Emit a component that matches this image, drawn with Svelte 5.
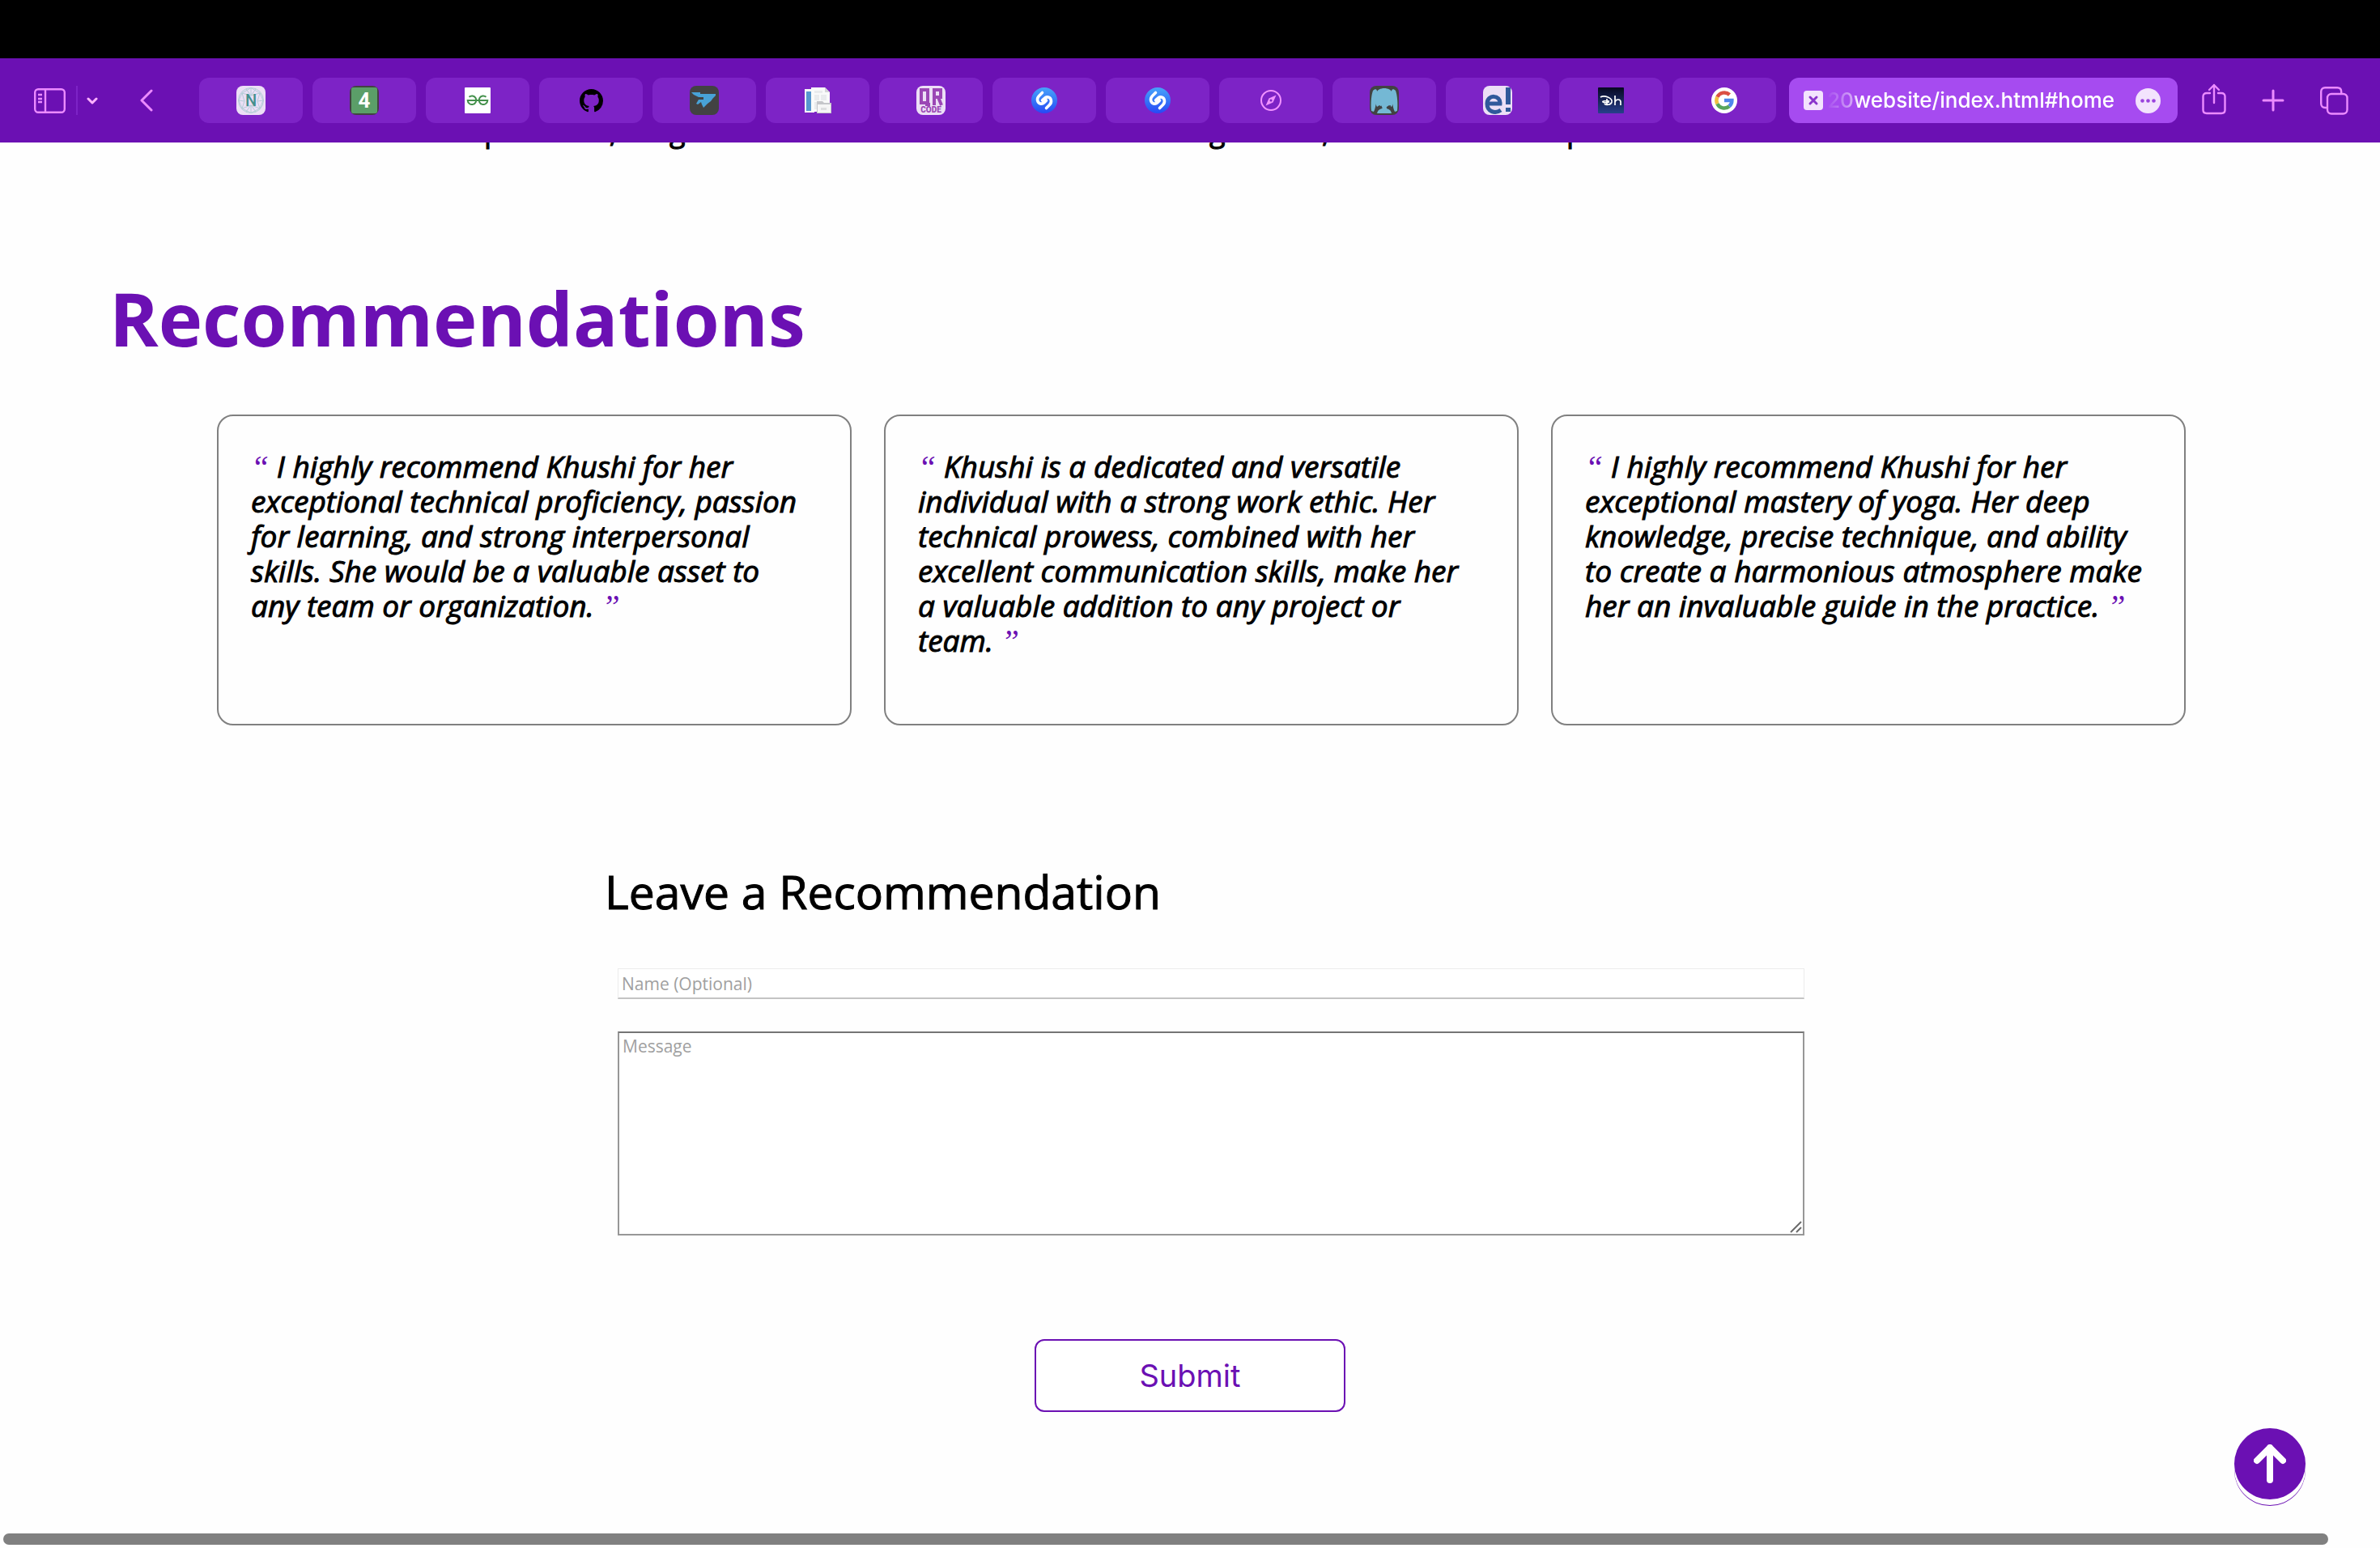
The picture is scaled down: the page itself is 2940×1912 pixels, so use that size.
<script>
  const tabs = [
    'notion', 'four', 'geeks', 'github', 'bird', 'documents', 'qr',
    'shazam', 'shazam', 'compass', 'hair', 'exclaim', 'hotstar', 'google'
  ];

  const quotes = [
    'I highly recommend Khushi for her exceptional technical proficiency, passion for learning, and strong interpersonal skills. She would be a valuable asset to any team or organization.',
    'Khushi is a dedicated and versatile individual with a strong work ethic. Her technical prowess, combined with her excellent communication skills, make her a valuable addition to any project or team.',
    'I highly recommend Khushi for her exceptional mastery of yoga. Her deep knowledge, precise technique, and ability to create a harmonious atmosphere make her an invaluable guide in the practice.'
  ];

  let name = $state('');
  let message = $state('');

  function submit(event) {
    event.preventDefault();
    name = '';
    message = '';
  }
</script>

{#snippet favicon(kind)}
  {#if kind === 'notion'}
    <svg width="36" height="36" viewBox="0 0 36 36">
      <rect width="36" height="36" rx="8" fill="#ecdff6" />
      <g fill="none" stroke="#b4cdd8" stroke-width="1">
        <circle cx="18" cy="18" r="15.500" />
        <path d="M18 2.500 7 9 3 18l4 10 11 5.500L29 28l4-10-4-9zM7 9l11 3 11-3M7 28l11-4 11 4M7 9l3 10-3 9M29 9l-3 10 3 9M18 2.500V12M18 24v9.500M3 18l7 1M33 18l-7 1M12 4l6 8 6-8M12 32l6-8 6 8" />
      </g>
      <text x="18" y="25" text-anchor="middle" font-size="20" font-weight="500" fill="#43908c" class="glyph">N</text>
    </svg>
  {:else if kind === 'four'}
    <svg width="36" height="36" viewBox="0 0 36 36">
      <rect width="36" height="36" rx="8" fill="#424242" />
      <rect x="2" y="2" width="32" height="32" rx="2" fill="#5b9e68" />
      <text x="18" y="27" text-anchor="middle" font-size="26" font-weight="700" fill="#fff" class="glyph">4</text>
    </svg>
  {:else if kind === 'geeks'}
    <svg width="32" height="32" viewBox="0 0 32 32">
      <rect width="32" height="32" rx="1" fill="#fff" />
      <path d="M26.500 11.800A5.300 5.300 0 1 0 28.300 16H3.700a5.300 5.300 0 1 0 1.800-4.200" fill="none" stroke="#43904b" stroke-width="2" />
    </svg>
  {:else if kind === 'github'}
    <svg width="29" height="29" viewBox="0 0 16 16">
      <path fill="#000" d="M8 0C3.580 0 0 3.580 0 8c0 3.540 2.290 6.530 5.470 7.590.4.070.550-.170.550-.380 0-.190-.010-.820-.010-1.490-2.010.370-2.530-.490-2.690-.940-.090-.230-.480-.940-.820-1.130-.280-.150-.680-.520-.010-.530.630-.010 1.080.580 1.230.820.720 1.210 1.870.870 2.330.660.070-.520.280-.870.510-1.070-1.780-.2-3.640-.890-3.640-3.950 0-.870.310-1.590.820-2.150-.080-.2-.360-1.020.080-2.120 0 0 .670-.210 2.200.820.640-.180 1.320-.270 2-.270s1.360.090 2 .270c1.530-1.040 2.200-.820 2.200-.820.440 1.100.160 1.920.080 2.120.510.560.820 1.270.820 2.150 0 3.070-1.870 3.750-3.650 3.950.290.250.540.730.540 1.480 0 1.070-.010 1.930-.010 2.200 0 .210.150.460.550.380A8 8 0 0 0 16 8c0-4.420-3.580-8-8-8z" />
    </svg>
  {:else if kind === 'bird'}
    <svg width="36" height="36" viewBox="0 0 36 36">
      <rect width="36" height="36" rx="8" fill="#424242" />
      <path d="M2 8h11v2h19v2l-3 3-3 4-4 3-5 5-2-4-1-3-4 3-2-1 3-5h6v-3h-6l-6-3z" fill="#48a2d6" />
    </svg>
  {:else if kind === 'documents'}
    <svg width="33" height="33" viewBox="0 0 33 33">
      <path d="M0 2h12v29H0z" fill="#f6f7f8" />
      <path d="M2 5h7v24H2z" fill="#5797cf" />
      <path d="M8 0h17l6 6v24H8z" fill="#f9fafa" />
      <path d="M25 0v6h6z" fill="#d4d5d8" />
      <path d="M12 4h10v3H12zM12 9h6v7h-6zM20 9h7v7h-7zM12 18h7v9h-7z" fill="#e9ebed" />
      <path d="M15 17h7l2 2h9v13H15z" fill="#c5c6ca" />
      <path d="M16 21h16v10H16z" fill="#f5f5f6" />
      <path d="M20 25h7v3h-7z" fill="#dddee0" />
    </svg>
  {:else if kind === 'qr'}
    <svg width="36" height="36" viewBox="0 0 36 36">
      <rect width="36" height="36" rx="8" fill="#ecdff6" />
      <path d="M6 5h8v16H6zM13 20v3h4M22 24V5h8v9h-8M27 14l4 10" fill="none" stroke="#9b47b5" stroke-width="4" />
      <text x="18" y="33" text-anchor="middle" font-size="10" font-weight="900" fill="#9b47b5" class="glyph">CODE</text>
    </svg>
  {:else if kind === 'shazam'}
    <svg width="32" height="32" viewBox="0 0 32 32">
      <defs>
        <linearGradient id="blue" x1="0" y1="0" x2="0" y2="1">
          <stop offset="0" stop-color="#46a5fa" />
          <stop offset="1" stop-color="#2748f5" />
        </linearGradient>
      </defs>
      <circle cx="16" cy="16" r="16" fill="url(#blue)" />
      <path d="M13.500 6.500 9.500 10.500c-3.500 3.500-2 8.500 1.500 9.500 3 1 4.500-1 7.500-4M18.500 25.500l4-4c3.500-3.500 2-8.500-1.500-9.500-3-1-4.500 1-7.500 4" fill="none" stroke="#fff" stroke-width="3.600" stroke-linecap="round" />
    </svg>
  {:else if kind === 'compass'}
    <svg width="26" height="26" viewBox="0 0 26 26">
      <circle cx="13" cy="13" r="12" fill="none" stroke="#f293ff" stroke-width="2" />
      <path d="m19.500 6.500-4 9-9 4 4-9z" fill="#f293ff" />
      <circle cx="13" cy="13" r="1.500" fill="#7d23c6" />
    </svg>
  {:else if kind === 'hair'}
    <svg width="36" height="36" viewBox="0 0 36 36">
      <rect width="36" height="36" rx="8" fill="#424242" />
      <g fill="#74b8d4">
        <path d="M8 9c2-8 18-8 20 0l1 13-2 4-3-2-3 2h-6l-3-2-3 2-2-4z" />
        <path d="M4 6c3-3 6-2 5 4S8 27 5 32l-3-1C1 22 2 11 4 6zM32 6c-3-3-6-2-5 4s1 17 4 22l3-1c1-9 0-20-2-25z" />
        <path d="M9 34c1-4 3-5 6-6v-4h6v4c3 1 5 2 6 6z" />
      </g>
      <path d="m20 27 6-3v4zM14 24l2 4-2-1z" fill="#424242" />
    </svg>
  {:else if kind === 'exclaim'}
    <svg width="36" height="36" viewBox="0 0 36 36">
      <rect width="36" height="36" rx="8" fill="#ecdff6" />
      <path d="M5 22h16c1-11-16-12-16 0 0 10 10 13 17 8" fill="none" stroke="#30599b" stroke-width="5" />
      <path d="M28 2h6v21h-6zM28 27h6v5h-6z" fill="#30599b" />
    </svg>
  {:else if kind === 'hotstar'}
    <svg width="32" height="32" viewBox="0 0 32 32">
      <defs>
        <linearGradient id="night" x1="0" y1="0" x2="0" y2="1">
          <stop offset="0" stop-color="#060821" />
          <stop offset="1" stop-color="#27408b" />
        </linearGradient>
      </defs>
      <rect width="32" height="32" rx="1" fill="url(#night)" />
      <path d="M3 12c5-3 15 1 14 6-1 4-8 4-9 2M11 14v8M14 17c-4-1-9 0-8 1 1 1 5 1 8 0M21 10v12M21 18c1-4 7-4 7 0v4" fill="none" stroke="#fff" stroke-width="1.700" />
    </svg>
  {:else}
    <svg width="32" height="32" viewBox="0 0 32 32">
      <circle cx="16" cy="16" r="16" fill="#fff" />
      <g fill="none" stroke-width="4.500">
        <path d="M22.500 9A9.600 9.600 0 0 0 7.400 11.800" stroke="#db5044" />
        <path d="M7.400 11.800a9.600 9.600 0 0 0 0 8.500" stroke="#f2bd42" />
        <path d="M7.400 20.300a9.600 9.600 0 0 0 14.800 3" stroke="#58a55c" />
        <path d="M22.200 23.300a9.600 9.600 0 0 0 3.200-7.200H16" stroke="#4f86ec" />
      </g>
    </svg>
  {/if}
{/snippet}

<div class="page">
  <header>
    <div class="notch"></div>
    <nav class="toolbar" aria-label="Browser">
      <button class="icon" aria-label="Sidebar">
        <svg width="39" height="31" viewBox="0 0 39 31" fill="none" stroke="#ec8bff" stroke-width="2.400">
          <rect x="1.200" y="1.200" width="36.600" height="28.600" rx="4" />
          <path d="M14 1v29M5 8h5M5 13h5M5 17h5" />
        </svg>
      </button>
      <span class="divider"></span>
      <button class="icon" aria-label="Tab groups">
        <svg width="14" height="9" viewBox="0 0 14 9" fill="none" stroke="#ffb3ff" stroke-width="3" stroke-linecap="round" stroke-linejoin="round"><path d="m2 2 5 5 5-5" /></svg>
      </button>
      <button class="icon back" aria-label="Back">
        <svg width="16" height="28" viewBox="0 0 16 28" fill="none" stroke="#ec8bff" stroke-width="3" stroke-linecap="round" stroke-linejoin="round"><path d="M14 2 2 14l12 12" /></svg>
      </button>
      <div class="tabs">
        {#each tabs as tab}
          <button class="tab" aria-label={tab}>{@render favicon(tab)}</button>
        {/each}
      </div>
      <div class="active">
        <button class="icon" aria-label="Close tab">
          <svg width="24" height="24" viewBox="0 0 24 24">
            <rect width="24" height="24" rx="4" fill="#f3e3fd" />
            <path d="m8 8 8 8M16 8l-8 8" stroke="#8a35cc" stroke-width="3" stroke-linecap="round" />
          </svg>
        </button>
        <span class="url">20website/index.html#home</span>
        <button class="icon" aria-label="Page menu">
          <svg width="31" height="31" viewBox="0 0 31 31">
            <circle cx="15.500" cy="15.500" r="15.500" fill="#f3e3fd" />
            <g fill="#9a43dd"><circle cx="8.500" cy="15.500" r="2.300" /><circle cx="15.500" cy="15.500" r="2.300" /><circle cx="22.500" cy="15.500" r="2.300" /></g>
          </svg>
        </button>
      </div>
      <div class="actions">
        <button class="icon" aria-label="Share">
          <svg width="30" height="42" viewBox="0 0 30 42" fill="none" stroke="#ec8bff" stroke-width="2.400" stroke-linecap="round" stroke-linejoin="round">
            <path d="M10 12H6c-3 0-4.500 1.500-4.500 4v17c0 3 1.500 4 4.500 4h18c3 0 4.500-1 4.500-4V16c0-2.500-1.500-4-4.500-4h-4M15 24V2M9 8l6-6 6 6" />
          </svg>
        </button>
        <button class="icon" aria-label="New tab">
          <svg width="28" height="28" viewBox="0 0 28 28" fill="none" stroke="#ec8bff" stroke-width="3" stroke-linecap="round"><path d="M14 2v24M2 14h24" /></svg>
        </button>
        <button class="icon" aria-label="Tab overview">
          <svg width="35" height="35" viewBox="0 0 35 35" fill="none" stroke="#ec8bff" stroke-width="2.400">
            <rect x="9" y="9" width="24.500" height="24.500" rx="5" />
            <path d="M9 26H6.200c-3 0-5-2-5-5V6.200c0-3 2-5 5-5h15c3 0 5 2 5 5v3" />
          </svg>
        </button>
      </div>
    </nav>
  </header>

  <main>
    <p class="intro">Contributed as producer, a sign and media at an annual student fest galleries, and took on setup.</p>

    <h1>Recommendations</h1>
    <section class="cards">
      {#each quotes as quote}
        <blockquote><span class="mark">“</span> {quote} <span class="mark">”</span></blockquote>
      {/each}
    </section>

    <form onsubmit={submit}>
      <h2>Leave a Recommendation</h2>
      <div class="fields">
        <input type="text" placeholder="Name (Optional)" aria-label="Name (Optional)" bind:value={name} />
        <div class="area">
          <textarea placeholder="Message" aria-label="Message" bind:value={message}></textarea>
          <svg class="grip" width="16" height="16" viewBox="0 0 16 16" stroke="#6b6b6b" stroke-width="2"><path d="M1 14 14 1M8 14l6-6" /></svg>
        </div>
      </div>
      <button class="submit" type="submit">Submit</button>
    </form>
  </main>

  <a class="top" href="#home" aria-label="Back to top">
    <svg width="40" height="48" viewBox="0 0 40 48" fill="none" stroke="#fff" stroke-width="8" stroke-linecap="round" stroke-linejoin="round"><path d="M20 44V4M4 20 20 4l16 16" /></svg>
  </a>
  <div class="scrollbar"></div>
</div>

<style>
  :global(body) {
    background: #fefefe;
  }
  .page {
    min-height: 100vh;
    display: flex;
    flex-direction: column;
    box-sizing: border-box;
    font-family: 'Open Sans', 'Noto Sans', sans-serif;
    color: #000;
  }
  svg {
    display: block;
    flex: none;
  }
  button {
    padding: 0;
    border: 0;
    background: none;
    font: inherit;
    cursor: pointer;
  }
  .glyph {
    font-family: Roboto, sans-serif;
  }
  .notch {
    height: 72px;
    background: #000;
  }
  .toolbar {
    display: flex;
    align-items: center;
    height: 104px;
    box-sizing: border-box;
    padding: 0 39px 0 42px;
    background: #6b10b3;
  }
  .divider {
    width: 2px;
    height: 36px;
    margin: 0 11px 0 13px;
    background: #7d23c6;
  }
  .back {
    margin: 0 57px 0 52px;
  }
  .tabs {
    flex: 1;
    display: flex;
    gap: 12px;
  }
  .tab {
    flex: 1;
    display: flex;
    align-items: center;
    justify-content: center;
    height: 56px;
    border-radius: 12px;
    background: #7d23c6;
  }
  .active {
    width: 480px;
    height: 56px;
    box-sizing: border-box;
    margin: 0 30px 0 16px;
    padding: 0 21px 0 18px;
    display: flex;
    align-items: center;
    border-radius: 12px;
    background: #a64bf0;
  }
  .url {
    flex: 1;
    margin-right: 26px;
    text-align: right;
    font: 500 26px/32px Inter, sans-serif;
    color: #fff;
    mask-image: linear-gradient(90deg, transparent 4px, rgba(0, 0, 0, 0.5) 36px, #000 44px);
  }
  .actions {
    display: flex;
    align-items: center;
    gap: 44px;
  }
  main {
    flex: 1;
  }
  .intro,
  blockquote,
  h2 {
    -webkit-text-stroke: 1px #000;
  }
  .intro {
    height: 16px;
    margin: 0;
    padding: 0 340px;
    display: flex;
    align-items: flex-end;
    overflow: hidden;
    white-space: nowrap;
    font-size: 36px;
    line-height: 60px;
  }
  h1 {
    margin: 141px 135px 59px;
    font-size: 92px;
    line-height: 120px;
    font-weight: 700;
    color: #6b10b3;
  }
  .cards {
    display: flex;
    gap: 40px;
    padding: 0 240px 0 268px;
  }
  blockquote {
    flex: 1;
    min-height: 384px;
    box-sizing: border-box;
    margin: 0;
    padding: 40px 48px 40px 40px;
    border: 2px solid #808080;
    border-radius: 20px;
    font-size: 37px;
    line-height: 43px;
    font-style: italic;
  }
  .mark {
    font-family: 'Liberation Serif', serif;
    font-size: 40px;
    line-height: 0;
    color: #6b10b3;
    -webkit-text-stroke: 0;
  }
  form {
    display: flex;
    flex-direction: column;
    padding: 165px 711px 0 747px;
  }
  h2 {
    margin: 0 0 55px;
    font-size: 57px;
    line-height: 80px;
    font-weight: 400;
  }
  .fields {
    display: flex;
    flex-direction: column;
    gap: 40px;
    padding-left: 16px;
  }
  input,
  textarea {
    display: block;
    width: 100%;
    box-sizing: border-box;
    margin: 0;
    font: 400 21px/28px 'Open Sans', sans-serif;
    background: #fff;
    border-radius: 0;
    outline: 0;
  }
  input {
    height: 38px;
    padding: 0 4px;
    border: 1px solid #ececec;
    border-bottom: 2px solid #c4c4c4;
  }
  textarea {
    height: 252px;
    padding: 2px 4px;
    border: 2px solid #979797;
    border-top-color: #757575;
    resize: none;
  }
  input::placeholder,
  textarea::placeholder {
    color: #a0a0a0;
  }
  .area {
    position: relative;
  }
  .grip {
    position: absolute;
    right: 2px;
    bottom: 2px;
  }
  .submit {
    align-self: center;
    width: 384px;
    height: 90px;
    margin-top: 128px;
    margin-right: 36px;
    border: 2px solid #6b10b3;
    border-radius: 12px;
    background: #fff;
    font: 400 38px/48px Inter, sans-serif;
    color: #6b10b3;
  }
  .top {
    position: fixed;
    right: 92px;
    bottom: 60px;
    width: 88px;
    height: 88px;
    display: flex;
    align-items: center;
    justify-content: center;
    border-radius: 50%;
    background: #6b10b3;
    box-shadow: 0 7px 0 #fefefe, 0 8px 0 #6b10b3;
  }
  .scrollbar {
    height: 14px;
    margin: 0 64px 4px 4px;
    border-radius: 7px;
    background: #808080;
  }
</style>
